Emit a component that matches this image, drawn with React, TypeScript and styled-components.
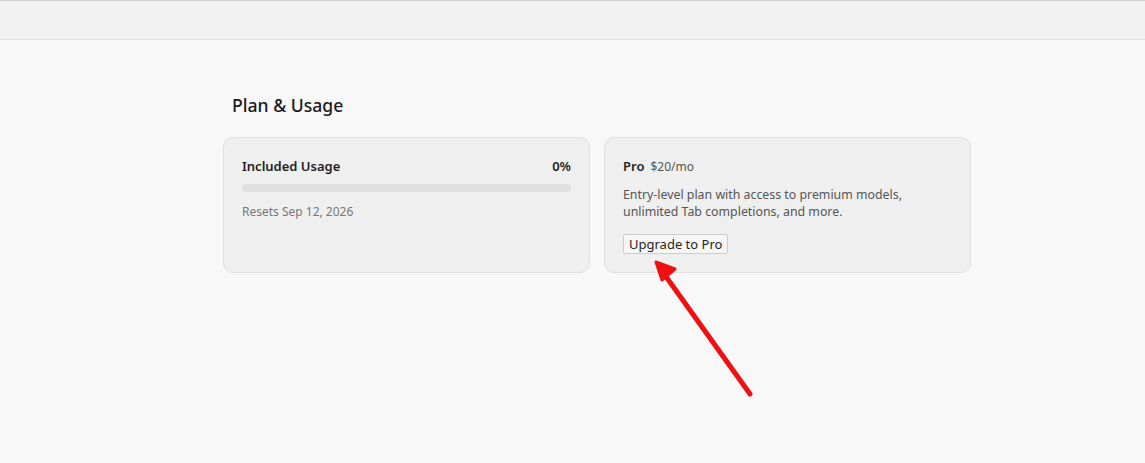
import React from 'react'
import styled, { createGlobalStyle } from 'styled-components'

const GlobalStyle = createGlobalStyle`
  html, body {
    margin: 0;
    padding: 0;
    background: #f8f8f8;
    font-family: "Noto Sans", "Open Sans", sans-serif;
    color: #1f1f1f;
  }
`

const Page = styled.div`
  position: relative;
  width: 1145px;
  height: 463px;
  overflow: hidden;
  background: #f8f8f8;
`

const TopBar = styled.div`
  height: 38px;
  background: #f2f2f2;
  border-top: 1px solid #cfcfcf;
  border-bottom: 1px solid #e2e2e2;
`

const Content = styled.main`
  padding: 53px 0 0 223px;
`

const Title = styled.h2`
  margin: 0 0 20px 9px;
  font-size: 17.6px;
  font-weight: 500;
  line-height: 24px;
  color: #1a1a1a;
`

const Cards = styled.div`
  display: grid;
  grid-template-columns: 367px 367px;
  gap: 14px;
`

const Card = styled.section`
  box-sizing: border-box;
  height: 136px;
  padding: 19px 18px;
  background: #efefef;
  border: 1px solid #e0e0e0;
  border-radius: 10px;
`

const Row = styled.div`
  display: flex;
  align-items: baseline;
  justify-content: space-between;
`

const Label = styled.span`
  font-size: 13px;
  font-weight: 600;
  color: #1f1f1f;
`

const Bar = styled.div`
  margin-top: 9px;
  height: 8px;
  border-radius: 4px;
  background: #e0e0e0;
`

const Fill = styled.div`
  height: 100%;
  border-radius: 4px;
  background: #555;
`

const Muted = styled.div`
  margin-top: 11px;
  font-size: 12px;
  color: #777;
`

const PlanHead = styled.div`
  display: flex;
  align-items: baseline;
  gap: 6px;
`

const Price = styled.span`
  font-size: 12px;
  color: #555;
`

const Desc = styled.p`
  margin: 11px 0 0;
  font-size: 12.35px;
  line-height: 17px;
  color: #555;
`

const Button = styled.button`
  display: block;
  margin-top: 14px;
  height: 20px;
  padding: 0 5px;
  font-family: inherit;
  font-size: 13px;
  color: #1f1f1f;
  background: #f6f6f6;
  border: 1px solid #cdcdcd;
  border-radius: 2px;
  cursor: pointer;
`

const Arrow = styled.svg`
  position: absolute;
  left: 640px;
  top: 250px;
  pointer-events: none;
`

export default function App() {
  const used = 0
  return (
    <Page>
      <GlobalStyle />
      <TopBar />
      <Content>
        <Title>Plan &amp; Usage</Title>
        <Cards>
          <Card>
            <Row>
              <Label>Included Usage</Label>
              <Label>{used}%</Label>
            </Row>
            <Bar>
              <Fill style={{ width: `${used}%` }} />
            </Bar>
            <Muted>Resets Sep 12, 2026</Muted>
          </Card>
          <Card>
            <PlanHead>
              <Label>Pro</Label>
              <Price>$20/mo</Price>
            </PlanHead>
            <Desc>
              Entry-level plan with access to premium models,
              <br />
              unlimited Tab completions, and more.
            </Desc>
            <Button>Upgrade to Pro</Button>
          </Card>
        </Cards>
      </Content>
      <Arrow width="130" height="160" viewBox="0 0 130 160">
        <line x1="110" y1="144" x2="27" y2="28" stroke="#ee1111" strokeWidth="5" strokeLinecap="round" />
        <polygon points="16,12 35,19 22,30" fill="#ee1111" stroke="#ee1111" strokeWidth="3" strokeLinejoin="round" />
      </Arrow>
    </Page>
  )
}
